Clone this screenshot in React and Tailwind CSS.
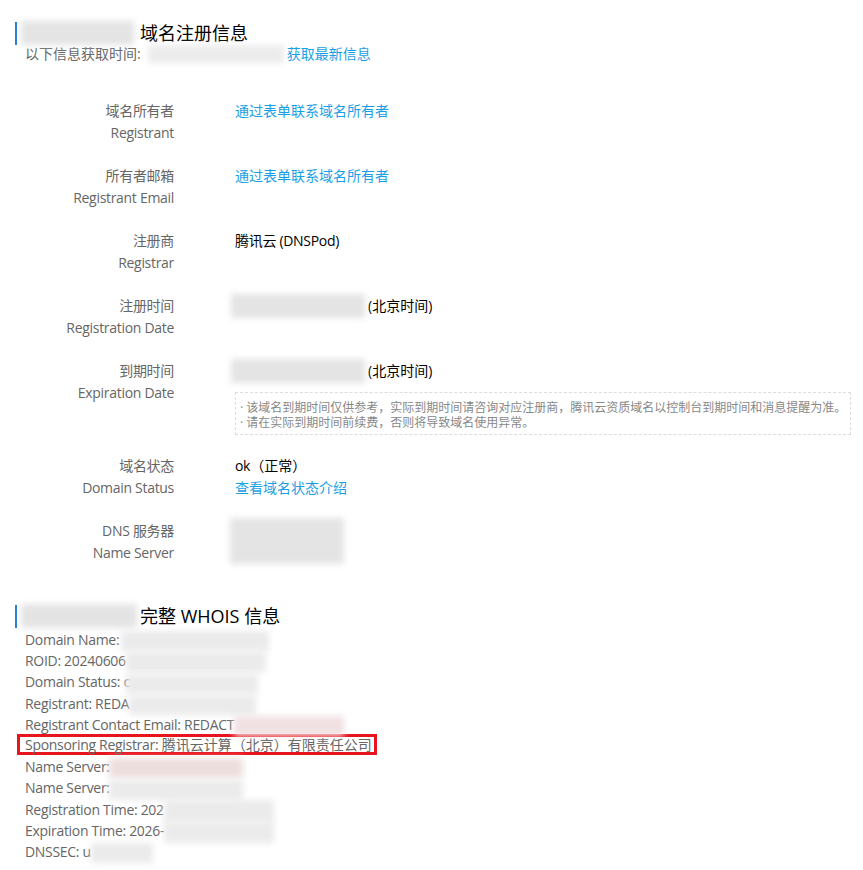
import React from "react";

const FONT = "[font-family:'Open_Sans','Noto_Sans_CJK_SC',sans-serif]";

function Blur({ className = "" }) {
  return <span className={"inline-block align-middle bg-[#e4e4e4] blur-[3px] " + className} />;
}

function Row({ cn, en, children, mb = "mb-[21px]" }) {
  return (
    <div className={"flex " + mb}>
      <div className="w-[174px] shrink-0 text-right text-[#666] leading-[22px]">
        <div>{cn}</div>
        <div>{en}</div>
      </div>
      <div className="ml-[61px] leading-[22px] text-black">{children}</div>
    </div>
  );
}

const Link = ({ children }) => <span className="text-[#1a9fe6] tracking-[0px]">{children}</span>;

function WLine({ label, blur }) {
  return (
    <div className="h-[21.2px] leading-[21.2px] whitespace-nowrap">
      {label}
      {blur}
    </div>
  );
}

export default function App() {
  return (
    <div className={"min-h-[870px] bg-white text-[14px] tracking-[-0.3px] pt-[21px] " + FONT}>
      {/* Section 1 heading */}
      <div className="ml-[15px] flex items-center h-[24px] tracking-[0px]">
        <div className="w-[2px] h-[23px] bg-[#1f7ad6]" />
        <Blur className="ml-[4px] w-[113px] h-[24px] bg-[#dcdcdc]" />
        <span className="ml-[6px] text-[18px] leading-[24px] text-black">域名注册信息</span>
      </div>
      <div className="ml-[25px] mt-[-1px] h-[20px] leading-[20px] text-[#666] flex items-center whitespace-nowrap tracking-[0px]">
        <span>以下信息获取时间:</span>
        <Blur className="ml-[7px] w-[136px] h-[18px] bg-[#ececec]" />
        <span className="ml-[3px]"><Link>获取最新信息</Link></span>
      </div>

      <div className="mt-[36px]">
        <Row cn="域名所有者" en="Registrant">
          <Link>通过表单联系域名所有者</Link>
        </Row>
        <Row cn="所有者邮箱" en="Registrant Email">
          <Link>通过表单联系域名所有者</Link>
        </Row>
        <Row cn="注册商" en="Registrar">
          腾讯云 (DNSPod)
        </Row>
        <Row cn="注册时间" en="Registration Date">
          <div className="flex items-center h-[22px]">
            <Blur className="ml-[-4px] w-[134px] h-[24px]" />
            <span className="ml-[3px] tracking-[0px]">(北京时间)</span>
          </div>
        </Row>
        <Row cn="到期时间" en="Expiration Date" mb="mb-[20px]">
          <div className="flex items-center h-[22px]">
            <Blur className="ml-[-4px] w-[134px] h-[24px]" />
            <span className="ml-[3px] tracking-[0px]">(北京时间)</span>
          </div>
          <div className="mt-[10px] w-[616px] border border-dashed border-[#dcdcdc] pl-[4px] pt-[7px] pb-[4px] text-[12px] tracking-[0px] leading-[15px] text-[#888] whitespace-nowrap">
            <div>· 该域名到期时间仅供参考，实际到期时间请咨询对应注册商，腾讯云资质域名以控制台到期时间和消息提醒为准。</div>
            <div>· 请在实际到期时间前续费，否则将导致域名使用异常。</div>
          </div>
        </Row>
        <Row cn="域名状态" en="Domain Status">
          <div>ok<span className="tracking-[0px]">（正常）</span></div>
          <Link>查看域名状态介绍</Link>
        </Row>
        <Row cn="DNS 服务器" en="Name Server" mb="mb-0">
          <Blur className="ml-[-5px] mt-[-2px] w-[114px] h-[46px] bg-[#e2e2e2]" />
        </Row>
      </div>

      {/* Section 2 heading */}
      <div className="ml-[15px] mt-[40px] flex items-center h-[24px] tracking-[0px]">
        <div className="w-[2px] h-[23px] bg-[#1f7ad6]" />
        <Blur className="ml-[4px] w-[116px] h-[24px] bg-[#dcdcdc]" />
        <span className="ml-[3px] text-[18px] leading-[24px] text-black">完整 WHOIS 信息</span>
      </div>

      <div className="ml-[25px] mt-[1px] text-[#666]">
        <WLine label="Domain Name: " blur={<Blur className="ml-[-2px] w-[148px] h-[20px] bg-[#ebebeb]" />} />
        <WLine label="ROID: 20240606" blur={<Blur className="w-[140px] h-[20px] bg-[#ebebeb]" />} />
        <WLine label="Domain Status: c" blur={<Blur className="ml-[-4px] w-[132px] h-[20px] bg-[#ebebeb]" />} />
        <WLine label="Registrant: REDA" blur={<Blur className="w-[127px] h-[20px] bg-[#ebebeb]" />} />
        <WLine label="Registrant Contact Email: REDACT" blur={<Blur className="w-[110px] h-[20px] bg-[#f1e1e3]" />} />
        <div className="h-[21.2px] flex items-start">
          <div className="ml-[-8px] mt-[-1px] pl-[5px] pr-[2px] h-[21px] w-fit border-[3px] border-[#e8141e] flex items-center whitespace-nowrap leading-[15px]">
            Sponsoring Registrar:&nbsp;<span className="tracking-[0px]">腾讯云计算（北京）有限责任公司</span>
          </div>
        </div>
        <WLine label="Name Server: " blur={<Blur className="ml-[-4px] w-[134px] h-[20px] bg-[#eddede]" />} />
        <WLine label="Name Server: " blur={<Blur className="ml-[-4px] w-[134px] h-[20px] bg-[#ebebeb]" />} />
        <WLine label="Registration Time: 202" blur={<Blur className="w-[110px] h-[22px] bg-[#ebebeb]" />} />
        <WLine label="Expiration Time: 2026-" blur={<Blur className="w-[110px] h-[22px] bg-[#ebebeb]" />} />
        <WLine label="DNSSEC: u" blur={<Blur className="w-[62px] h-[20px] bg-[#ebebeb]" />} />
      </div>
    </div>
  );
}
